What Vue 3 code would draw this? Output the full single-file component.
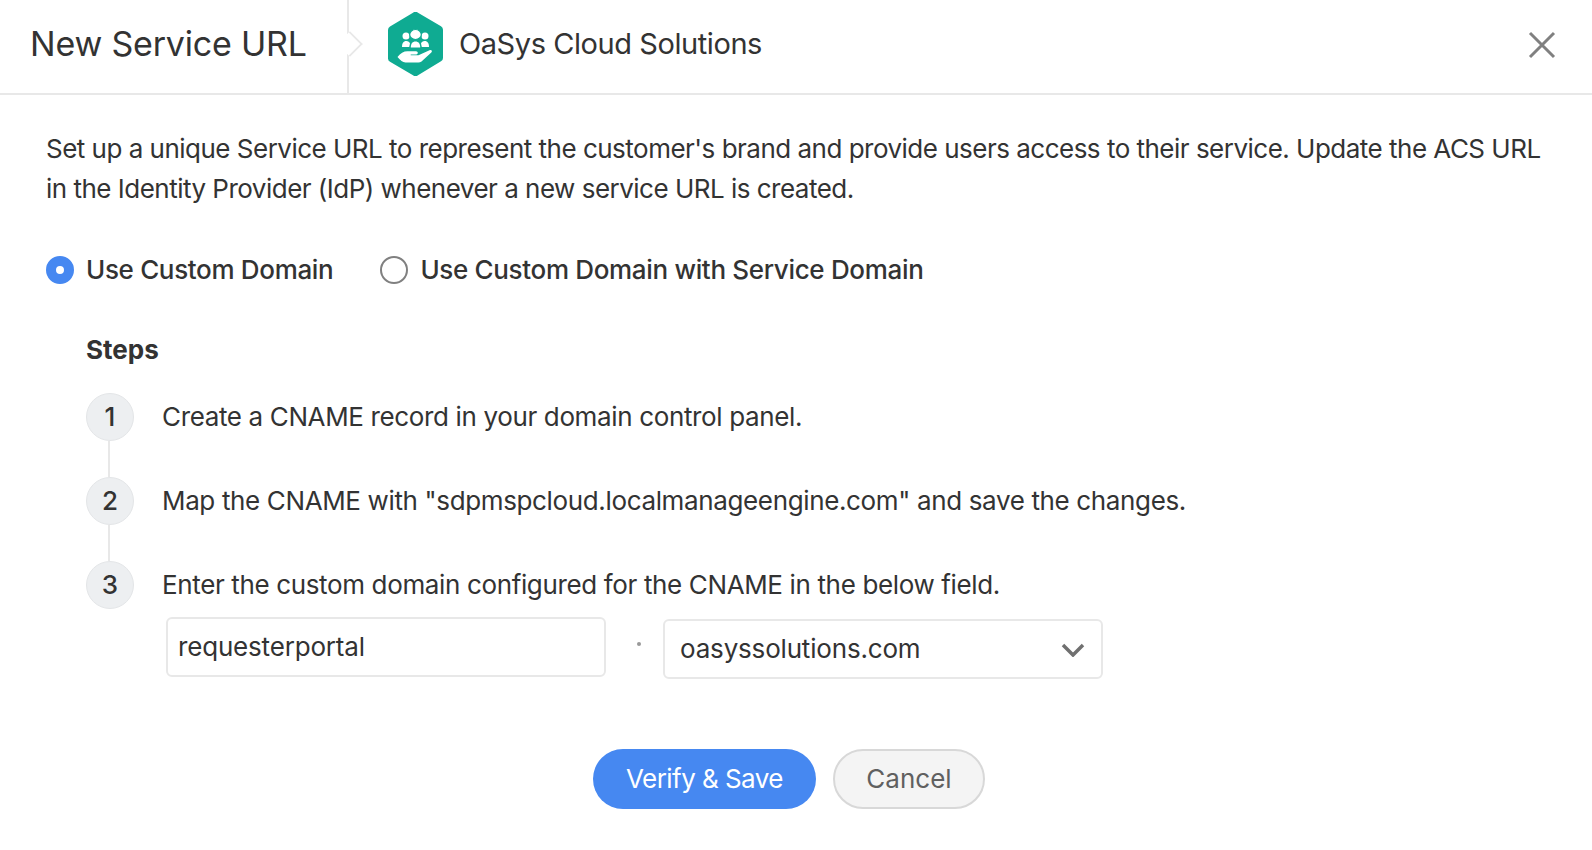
<template>
  <div class="dialog">
    <header class="head">
      <h1 class="title">New Service URL</h1>
      <div class="org">
        <svg class="org-logo" viewBox="0 0 55 64" width="55" height="64">
          <path d="M25 .8a4 4 0 0 1 5 0l23 13.500a4 4 0 0 1 2 3.500v28a4 4 0 0 1-2 3.500l-23 13.900a4 4 0 0 1-5 0L2 49.800a4 4 0 0 1-2-3.500V18a4 4 0 0 1 2-3.500z" fill="#0fab92" />
          <g fill="#fff">
            <circle cx="18" cy="24" r="3.500" />
            <circle cx="37" cy="24" r="3.500" />
            <path d="M14 35c0-3.500 1.300-6 4.300-6 2 0 3.200 1 3.700 2.500l-.8 3.500z" />
            <path d="M41 35c0-3.500-1.300-6-4.300-6-2 0-3.200 1-3.700 2.500l.8 3.500z" />
            <ellipse cx="27.500" cy="22.500" rx="5.800" ry="5" stroke="#0fab92" stroke-width="1.200" />
            <path d="M22.800 35.500c0-4 1.800-6 4.700-6s4.700 2 4.700 6z" />
            <path d="M9.500 45c3-3.800 6-5.800 10-5.800h8.500c2.200 0 2.600 3 .2 3.200h-5.500v.8h7.800l11-5c2-.8 3.200 1 1.800 2.300L33.500 49.500c-1 .7-2 1-3 1H17.500c-3 0-5-2.500-8-5.500z" />
          </g>
        </svg>
        <span class="org-name">OaSys Cloud Solutions</span>
      </div>
      <svg class="close" viewBox="0 0 28 28" width="28" height="28">
        <path d="M2 2l24 24M26 2L2 26" stroke="#808080" stroke-width="3" fill="none" />
      </svg>
    </header>

    <main class="body">
      <p class="intro">
        Set up a unique Service URL to represent the customer's brand and provide users access to their service. Update the ACS URL in the Identity Provider (IdP) whenever a new service URL is created.
      </p>

      <div class="radios">
        <label class="radio" v-for="(o, i) in options" :key="o">
          <span class="dot" :class="{ on: picked === i }" @click="picked = i"></span>
          <span>{{ o }}</span>
        </label>
      </div>

      <section class="steps">
        <h2 class="steps-title">Steps</h2>
        <div class="step" v-for="(s, i) in steps" :key="i">
          <span class="num">{{ i + 1 }}</span>
          <span class="step-text">{{ s }}</span>
        </div>
        <div class="fields">
          <div class="field input">requesterportal</div>
          <span class="sep"></span>
          <div class="field select">
            <span>oasyssolutions.com</span>
            <svg viewBox="0 0 24 14" width="24" height="14">
              <path d="M2 2l10 10L22 2" stroke="#707070" stroke-width="3.500" fill="none" />
            </svg>
          </div>
        </div>
      </section>

      <div class="actions">
        <button class="btn primary">Verify &amp; Save</button>
        <button class="btn ghost">Cancel</button>
      </div>
    </main>
  </div>
</template>

<script setup>
import { ref } from "vue";

const picked = ref(0);
const options = ["Use Custom Domain", "Use Custom Domain with Service Domain"];
const steps = [
  "Create a CNAME record in your domain control panel.",
  'Map the CNAME with "sdpmspcloud.localmanageengine.com" and save the changes.',
  "Enter the custom domain configured for the CNAME in the below field.",
];
</script>

<style>
body {
  background: #fff;
}
</style>

<style scoped>
.dialog {
  width: 1592px;
  height: 850px;
  background: #fff;
  color: #333;
  font-family: Inter, "Liberation Sans", sans-serif;
  overflow: hidden;
}
.head {
  display: flex;
  align-items: center;
  height: 93px;
  border-bottom: 2px solid #e8e8e8;
  padding: 0 36px 0 30px;
}
.title {
  width: 317px;
  margin: 0 0 6px;
  font-size: 34px;
  font-weight: 400;
  letter-spacing: -0.2px;
}
.org {
  flex: 1;
  display: flex;
  align-items: center;
  gap: 16px;
  align-self: stretch;
  padding: 0 0 6px 39px;
  position: relative;
  border-left: 2px solid #e8e8e8;
}
.org::before {
  content: "";
  position: absolute;
  left: -9px;
  top: 34px;
  width: 18px;
  height: 18px;
  background: #fff;
  border-top: 2px solid #e8e8e8;
  border-right: 2px solid #e8e8e8;
  transform: rotate(45deg) scale(0.9);
}
.org-logo {
  flex: none;
}
.org-name {
  font-size: 29px;
  letter-spacing: -0.43px;
}
.close {
  flex: none;
  margin-bottom: 3px;
}
.body {
  padding: 34px 40px 0 46px;
}
.intro {
  margin: 0;
  font-size: 26px;
  line-height: 39.5px;
  letter-spacing: -0.51px;
}
.radios {
  display: flex;
  gap: 47px;
  margin-top: 42px;
}
.radio {
  display: flex;
  align-items: center;
  gap: 12px;
  font-size: 26px;
  font-weight: 500;
  line-height: 40px;
  letter-spacing: -0.33px;
}
.dot {
  width: 28px;
  height: 28px;
  box-sizing: border-box;
  border-radius: 50%;
  border: 2px solid #808080;
  background: #fff;
}
.dot.on {
  border: 10px solid #4688f1;
}
.steps {
  padding-left: 40px;
  margin-top: 40px;
}
.steps-title {
  margin: 0 0 23px;
  font-size: 26px;
  font-weight: 700;
  line-height: 40px;
}
.step {
  display: flex;
  align-items: center;
  gap: 28px;
  height: 48px;
  margin-bottom: 36px;
  font-size: 26px;
  letter-spacing: -0.36px;
  position: relative;
}
.step-text {
  margin-top: -2px;
}
.step:nth-of-type(-n + 2)::after {
  content: "";
  position: absolute;
  left: 22px;
  top: 48px;
  width: 2px;
  height: 36px;
  background: #e8e8e8;
}
.num {
  flex: none;
  width: 48px;
  height: 48px;
  border-radius: 50%;
  background: #edeff1;
  border: 1px solid #e4e6e8;
  box-sizing: border-box;
  display: flex;
  align-items: center;
  justify-content: center;
  font-weight: 500;
  letter-spacing: 0;
  padding-bottom: 2px;
}
.fields {
  display: flex;
  align-items: flex-start;
  margin: -28px 0 0 80px;
}
.field {
  box-sizing: border-box;
  width: 440px;
  height: 60px;
  border: 2px solid #e8e8e8;
  border-radius: 6px;
  display: flex;
  align-items: center;
  font-size: 26px;
  letter-spacing: -0.18px;
  background: #fff;
  padding-bottom: 2px;
}
.input {
  padding-left: 10px;
}
.select {
  margin-top: 2px;
  padding: 0 16px 2px 15px;
  justify-content: space-between;
}
.select svg {
  margin-top: 3px;
}
.sep {
  width: 4px;
  height: 4px;
  border-radius: 50%;
  background: #999;
  margin: 25px 22px 0 31px;
}
.actions {
  display: flex;
  justify-content: center;
  gap: 17px;
  margin-top: 70px;
  padding-right: 20px;
}
.btn {
  height: 60px;
  border-radius: 30px;
  font-family: inherit;
  font-size: 26px;
  padding: 0 0 2px;
}
.primary {
  width: 223px;
  border: 0;
  background: #4688f1;
  color: #fff;
  letter-spacing: -0.55px;
}
.ghost {
  width: 152px;
  border: 2px solid #d8d8d8;
  background: #f4f4f4;
  color: #606060;
}
</style>
